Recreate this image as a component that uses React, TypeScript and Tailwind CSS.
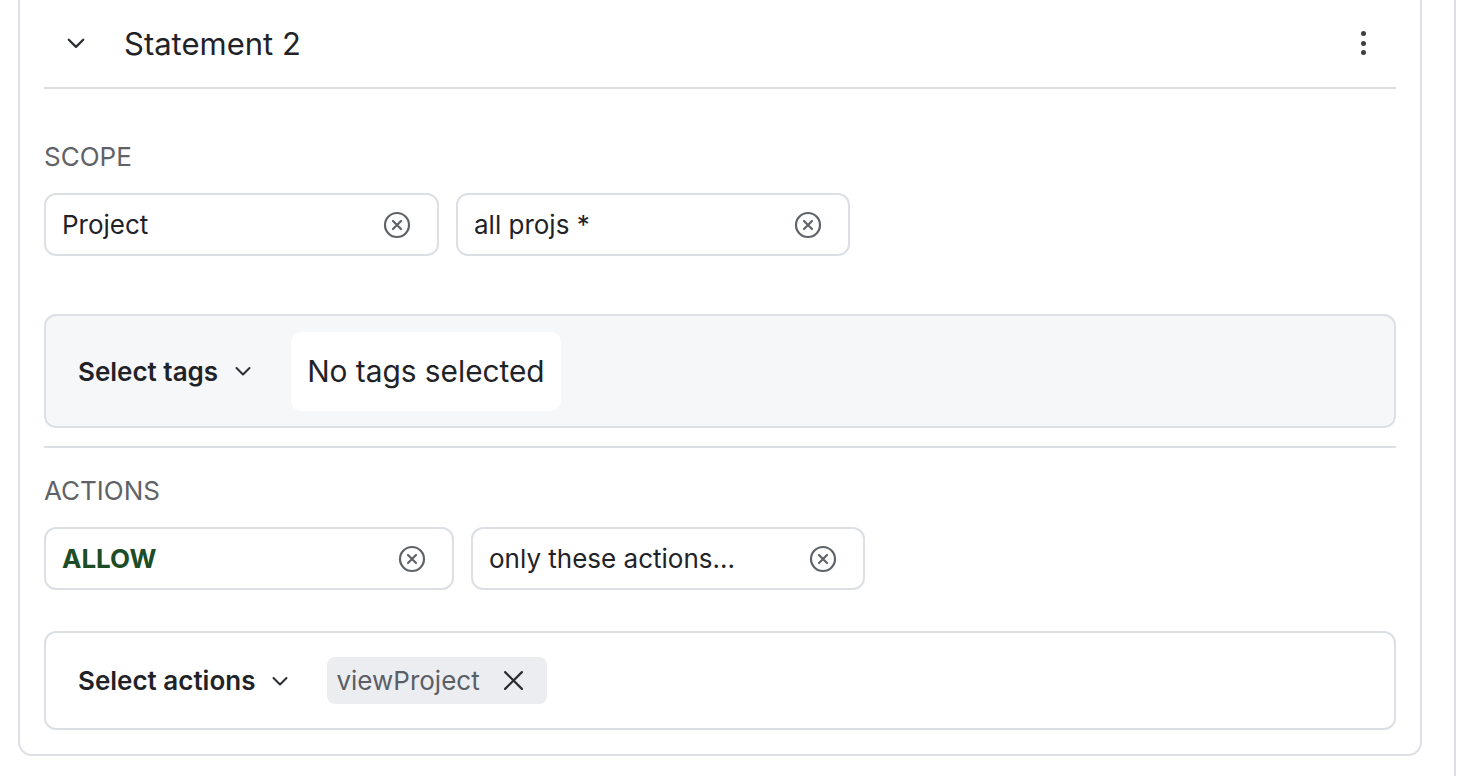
import React from "react";

const CircleX = () => (
  <svg width="28" height="28" viewBox="0 0 28 28" fill="none" stroke="#5f6368" strokeWidth="2.2" strokeLinecap="round">
    <circle cx="14" cy="14" r="12" />
    <path d="M10 10 L18 18 M18 10 L10 18" />
  </svg>
);

const SmallChevron = ({ size = 18 }: { size?: number }) => (
  <svg width={size} height={size} viewBox="0 0 18 18" fill="none" stroke="#2a2d33" strokeWidth="2" strokeLinecap="round" strokeLinejoin="round">
    <path d="M2.5 6 L9 12.5 L15.5 6" />
  </svg>
);

const Field = ({ text, width, green }: { text: string; width: string; green?: boolean }) => (
  <div className={`flex h-[63px] items-center justify-between rounded-[12px] border-2 border-[#dcdfe3] bg-white pl-[16px] pr-[26px] ${width}`}>
    <span className={green ? "text-[26px] font-bold text-[#1d4d26]" : "text-[26px] text-[#1f2328]"}>{text}</span>
    <CircleX />
  </div>
);

export default function App() {
  return (
    <div className="flex h-[776px] w-[1464px] overflow-hidden bg-white font-['Inter','Noto_Sans',sans-serif] text-[#1f2328]">
      <div className="ml-[18px] flex h-[756px] w-[1404px] flex-col rounded-b-[14px] border-x-2 border-b-2 border-[#dcdfe3] px-[24px]">
        <div className="flex h-[86px] shrink-0 items-center">
          <div className="ml-[22px] flex w-[58px] items-center">
            <SmallChevron size={20} />
          </div>
          <span className="text-[31px] leading-none text-[#1f2328]">Statement 2</span>
          <div className="ml-auto mr-[30px] flex flex-col items-center gap-[4.5px]">
            <span className="block h-[5px] w-[5px] rounded-full bg-[#3c4043]" />
            <span className="block h-[5px] w-[5px] rounded-full bg-[#3c4043]" />
            <span className="block h-[5px] w-[5px] rounded-full bg-[#3c4043]" />
          </div>
        </div>
        <div className="mt-[1px] h-[2px] shrink-0 bg-[#dcdfe3]" />

        <div className="mt-[53px] text-[26px] leading-[30px] text-[#5f6368]">SCOPE</div>
        <div className="mt-[21px] flex gap-[17px]">
          <Field text="Project" width="w-[395px]" />
          <Field text="all projs *" width="w-[394px]" />
        </div>

        <div className="mt-[58px] flex h-[114px] shrink-0 items-center rounded-[12px] border-2 border-[#dcdfe3] bg-[#f6f7f9] pl-[32px]">
          <span className="text-[26px] font-semibold text-[#1f2328]">Select tags</span>
          <span className="ml-[16px]"><SmallChevron /></span>
          <div className="ml-[39px] flex h-[79px] items-center rounded-[10px] bg-white px-[16px]">
            <span className="text-[29.8px] text-[#1f2328]">No tags selected</span>
          </div>
        </div>

        <div className="mt-[18px] h-[2px] shrink-0 bg-[#dcdfe3]" />

        <div className="mt-[28px] text-[26px] leading-[30px] text-[#5f6368]">ACTIONS</div>
        <div className="mt-[21px] flex gap-[17px]">
          <Field text="ALLOW" width="w-[410px]" green />
          <Field text="only these actions..." width="w-[394px]" />
        </div>

        <div className="mt-[41px] flex h-[99px] shrink-0 items-center rounded-[12px] border-2 border-[#dcdfe3] bg-white pl-[32px]">
          <span className="text-[26px] font-semibold text-[#1f2328]">Select actions</span>
          <span className="ml-[16px]"><SmallChevron /></span>
          <div className="ml-[38px] flex h-[47px] items-center gap-[23px] rounded-[8px] bg-[#ecedf0] pl-[9px] pr-[23px]">
            <span className="text-[26px] text-[#5a5f66]">viewProject</span>
            <svg width="21" height="21" viewBox="0 0 20 20" fill="none" stroke="#2a2d33" strokeWidth="2.1" strokeLinecap="round">
              <path d="M2 2 L18 18 M18 2 L2 18" />
            </svg>
          </div>
        </div>
      </div>
      <div className="ml-[32px] h-full w-[2px] bg-[#dcdfe3]" />
    </div>
  );
}
